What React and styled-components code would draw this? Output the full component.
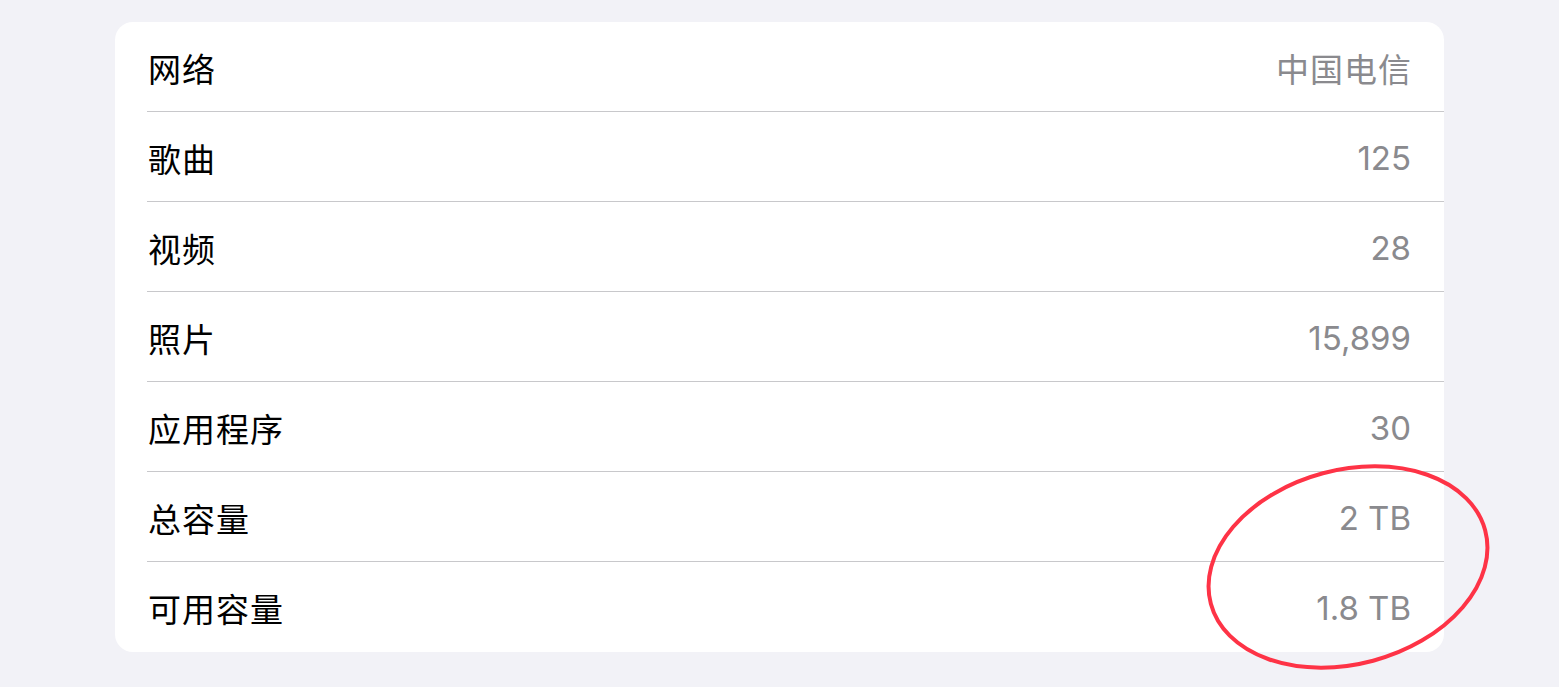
import styled, { createGlobalStyle } from "styled-components"

const GlobalStyle = createGlobalStyle`
  html, body {
    margin: 0;
    padding: 0;
    background: #f2f2f7;
  }
  body {
    font-family: Inter, "Noto Sans CJK SC", sans-serif;
    -webkit-font-smoothing: antialiased;
  }
`

const rows = [
  { label: "网络", value: "中国电信", cjk: true },
  { label: "歌曲", value: "125" },
  { label: "视频", value: "28" },
  { label: "照片", value: "15,899" },
  { label: "应用程序", value: "30" },
  { label: "总容量", value: "2 TB" },
  { label: "可用容量", value: "1.8 TB" },
]

export default function App() {
  return (
    <>
      <GlobalStyle />
      <Page>
        <Card>
          {rows.map((row, i) => (
            <Row key={row.label}>
              <RowInner $last={i === rows.length - 1}>
                <Label>{row.label}</Label>
                <Value $cjk={row.cjk}>{row.value}</Value>
              </RowInner>
            </Row>
          ))}
        </Card>
        <Mark width="300" height="220" viewBox="0 0 300 220">
          <ellipse
            cx="150"
            cy="110"
            rx="142"
            ry="97"
            transform="rotate(-15 150 110)"
            fill="none"
            stroke="#fe3346"
            strokeWidth="4"
          />
        </Mark>
      </Page>
    </>
  )
}

const Page = styled.div`
  position: relative;
  width: 1559px;
  height: 687px;
  padding: 22px 0 0 115px;
  box-sizing: border-box;
  overflow: hidden;
`

const Card = styled.div`
  width: 1329px;
  background: #ffffff;
  border-radius: 18px;
  overflow: hidden;
`

const Row = styled.div`
  padding-left: 32px;
`

const RowInner = styled.div`
  display: flex;
  align-items: center;
  justify-content: space-between;
  padding: 2px 33px 0 1px;
  box-sizing: border-box;
  border-bottom: ${(p) => (p.$last ? "none" : "1px solid #c8c8cb")};
  height: ${(p) => (p.$last ? "90px" : "90px")};
`

const Label = styled.span`
  font-size: 33px;
  color: #000000;
  letter-spacing: 1px;
`

const Value = styled.span`
  font-size: 33px;
  color: #8a8a8e;
  letter-spacing: ${(p) => (p.$cjk ? "1px" : "0")};
  margin-right: ${(p) => (p.$cjk ? "-1px" : "0")};
`

const Mark = styled.svg`
  position: absolute;
  left: 1198px;
  top: 457px;
  pointer-events: none;
`
